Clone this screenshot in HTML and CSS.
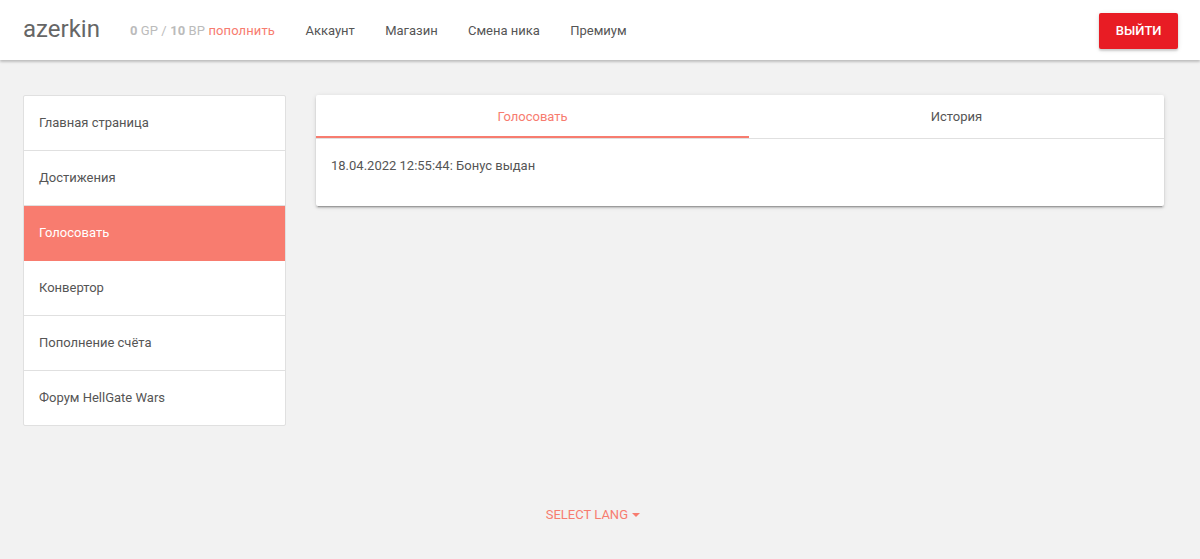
FILE: index.html
```html
<!DOCTYPE html>
<html lang="ru">
<head>
  <meta charset="UTF-8">
  <title>azerkin — Голосовать</title>
  <meta name="viewport" content="width=device-width, initial-scale=1.0">
  <link rel="stylesheet" href="styles.css">
</head>
<body>
  <nav class="topbar">
    <div class="brand">azerkin</div>
    <div class="balance"><b>0</b> GP / <b>10</b> BP <a href="#" class="accent">пополнить</a></div>
    <ul class="menu">
      <li><a href="#">Аккаунт</a></li>
      <li><a href="#">Магазин</a></li>
      <li><a href="#">Смена ника</a></li>
      <li><a href="#">Премиум</a></li>
    </ul>
    <a href="#" class="btn-exit">Выйти</a>
  </nav>

  <main class="layout">
    <ul class="collection">
      <li><a href="#">Главная страница</a></li>
      <li><a href="#">Достижения</a></li>
      <li class="active"><a href="#">Голосовать</a></li>
      <li><a href="#">Конвертор</a></li>
      <li><a href="#">Пополнение счёта</a></li>
      <li><a href="#">Форум HellGate Wars</a></li>
    </ul>

    <div class="card">
      <ul class="tabs">
        <li class="tab active">Голосовать</li>
        <li class="tab">История</li>
      </ul>
      <div class="card-content">18.04.2022 12:55:44: Бонус выдан</div>
    </div>
  </main>

  <footer class="footer">
    <a href="#" class="lang">Select lang <span class="caret"></span></a>
  </footer>
</body>
</html>
```

FILE: styles.css
```css
html, body {
  margin: 0;
  padding: 0;
  background: #f2f2f2;
  font-family: Roboto, "Noto Sans", sans-serif;
  color: #555;
}
a {
  text-decoration: none;
  color: inherit;
}
ul {
  list-style: none;
  margin: 0;
  padding: 0;
}
.accent {
  color: #f77c6f;
}
.topbar {
  height: 60px;
  background: #fff;
  display: flex;
  align-items: center;
  padding: 0 22px 0 23px;
  box-shadow: 0 2px 2px 0 rgba(0,0,0,0.14), 0 1px 4px 0 rgba(0,0,0,0.12);
  position: relative;
  z-index: 2;
}
.brand {
  font-size: 24px;
  color: #666;
  margin-right: 30px;
  padding-bottom: 2px;
}
.balance {
  font-size: 13px;
  color: #bbb;
  margin-right: 30.5px;
  letter-spacing: 0.1px;
}
.balance b {
  font-weight: 700;
}
.menu {
  display: flex;
  gap: 30.3px;
  font-size: 13px;
  color: #555;
}
.btn-exit {
  margin-left: auto;
  background: #e81c24;
  color: #fff;
  font-size: 13px;
  font-weight: 500;
  text-transform: uppercase;
  height: 36px;
  line-height: 36px;
  padding: 0 16.5px;
  border-radius: 2px;
  box-shadow: 0 2px 2px 0 rgba(0,0,0,0.14), 0 1px 5px 0 rgba(0,0,0,0.12);
  margin-top: 1px;
}
.layout {
  display: grid;
  grid-template-columns: 263px 1fr;
  gap: 30px;
  align-items: start;
  padding: 35px 36px 0 23px;
}
.collection {
  background: #fff;
  border: 1px solid #e0e0e0;
  border-radius: 2px;
  overflow: hidden;
}
.collection li {
  height: 54px;
  line-height: 54px;
  padding-left: 15px;
  font-size: 13px;
  border-bottom: 1px solid #e0e0e0;
}
.collection li:last-child {
  border-bottom: none;
}
.collection li.active {
  background: #f87c6f;
  color: #fff;
  border-bottom-color: #f87c6f;
}
.card {
  background: #fff;
  border-radius: 2px;
  box-shadow: 0 2px 2px 0 rgba(0,0,0,0.14), 0 1px 5px 0 rgba(0,0,0,0.12), 0 3px 1px -2px rgba(0,0,0,0.2);
}
.tabs {
  display: grid;
  grid-template-columns: 433px 1fr;
  height: 43px;
  border-bottom: 1px solid #e0e0e0;
}
.tab {
  text-align: center;
  line-height: 43px;
  font-size: 13px;
  color: #555;
}
.tab.active {
  color: #f77c6f;
  box-shadow: inset 0 -2px 0 #f77c6f;
}
.card-content {
  font-size: 13px;
  padding: 19px 15px 33px;
  line-height: 15px;
}
.footer {
  display: flex;
  justify-content: center;
  padding-top: 81px;
  padding-right: 14px;
}
.lang {
  color: #f77c6f;
  font-size: 13px;
  text-transform: uppercase;
}
.caret {
  display: inline-block;
  width: 0;
  height: 0;
  border-left: 4px solid transparent;
  border-right: 4px solid transparent;
  border-top: 4px solid #f77c6f;
  vertical-align: middle;
  margin-left: 1px;
  margin-bottom: 2px;
}
```
